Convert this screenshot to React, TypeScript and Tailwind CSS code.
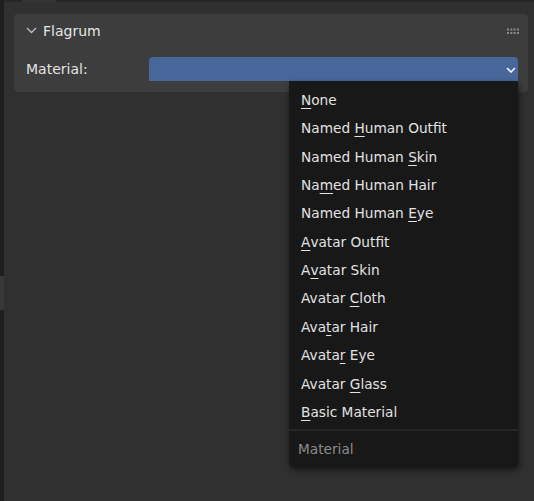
import React from "react";

type Item = { pre: string; key: string; post: string };

const items: Item[] = [
  { pre: "", key: "N", post: "one" },
  { pre: "Named ", key: "H", post: "uman Outfit" },
  { pre: "Named Human ", key: "S", post: "kin" },
  { pre: "Na", key: "m", post: "ed Human Hair" },
  { pre: "Named Human ", key: "E", post: "ye" },
  { pre: "", key: "A", post: "vatar Outfit" },
  { pre: "A", key: "v", post: "atar Skin" },
  { pre: "Avatar ", key: "C", post: "loth" },
  { pre: "Ava", key: "t", post: "ar Hair" },
  { pre: "Avata", key: "r", post: " Eye" },
  { pre: "Avatar ", key: "G", post: "lass" },
  { pre: "", key: "B", post: "asic Material" },
];

function Grip() {
  return (
    <svg width="13" height="7" viewBox="0 0 13 7" className="block">
      {[0, 1].map((r) =>
        [0, 1, 2, 3].map((c) => (
          <rect key={`${r}-${c}`} x={c * 3.3} y={r * 3.5 + 0.5} width="2" height="2" fill="#8a8a8a" />
        ))
      )}
    </svg>
  );
}

export default function App() {
  return (
    <div
      className="flex h-[501px] w-[534px] overflow-hidden bg-[#303030] text-[13.7px] text-[#e4e4e4]"
      style={{ fontFamily: "'DejaVu Sans', 'Liberation Sans', sans-serif" }}
    >
      {/* Left editor edge */}
      <div className="flex w-[4px] shrink-0 flex-col">
        <div className="h-[276px] bg-[#1e1e1e]" />
        <div className="h-[34px] bg-[#383838]" />
        <div className="flex-1 bg-[#1e1e1e]" />
      </div>

      <div className="flex flex-1 flex-col">
        {/* Top border */}
        <div className="flex h-[2px] shrink-0 bg-[#262626]">
          <div className="ml-[18px] w-[34px] bg-[#353535]" />
        </div>

        {/* Panel */}
        <div className="ml-[10px] mr-[6px] mt-[12px] flex h-[78px] flex-col rounded-[4px] bg-[#3d3d3d] pl-[12px] pr-[10px]">
          <div className="flex h-[34px] shrink-0 items-center">
            <svg width="11" height="7" viewBox="0 0 11 7" className="mt-[-1px]">
              <path d="M1 1 L5.5 5.5 L10 1" fill="none" stroke="#bdbdbd" strokeWidth="1.3" />
            </svg>
            <span className="ml-[6px] text-[14px] text-[#e6e6e6]">Flagrum</span>
            <div className="ml-auto mr-[-2px]">
              <Grip />
            </div>
          </div>

          <div className="mt-[9px] flex h-[24px] items-center">
            <span className="w-[123px] shrink-0 text-[14px] text-[#e2e2e2]">Material:</span>
            <div className="relative flex h-[24px] flex-1 items-center justify-end rounded-t-[4px] bg-[#47669a] pr-[2px]">
              <svg width="10" height="6" viewBox="0 0 10 6" className="mt-[2px]">
                <path d="M1 1 L5 5 L9 1" fill="none" stroke="#f2f2f2" strokeWidth="1.6" />
              </svg>

              {/* Dropdown menu */}
              <div className="absolute right-0 top-full z-10 w-[229px] rounded-b-[4px] bg-[#181818] shadow-[1px_3px_6px_rgba(0,0,0,0.55)]">
                <div className="pt-[5px]">
                  {items.map((it) => (
                    <div
                      key={it.pre + it.key + it.post}
                      className="flex h-[28.36px] items-center whitespace-pre pl-[12px] text-[#e2e2e2]"
                    >
                      {it.pre}
                      <span className="underline decoration-1 underline-offset-[3px]">{it.key}</span>
                      {it.post}
                    </div>
                  ))}
                </div>
                <div className="mt-[3px] border-t-[2px] border-[#262626]" />
                <div className="flex h-[36px] items-center pl-[9px] text-[#8c8c8c]">Material</div>
              </div>
            </div>
          </div>
        </div>
      </div>
    </div>
  );
}
